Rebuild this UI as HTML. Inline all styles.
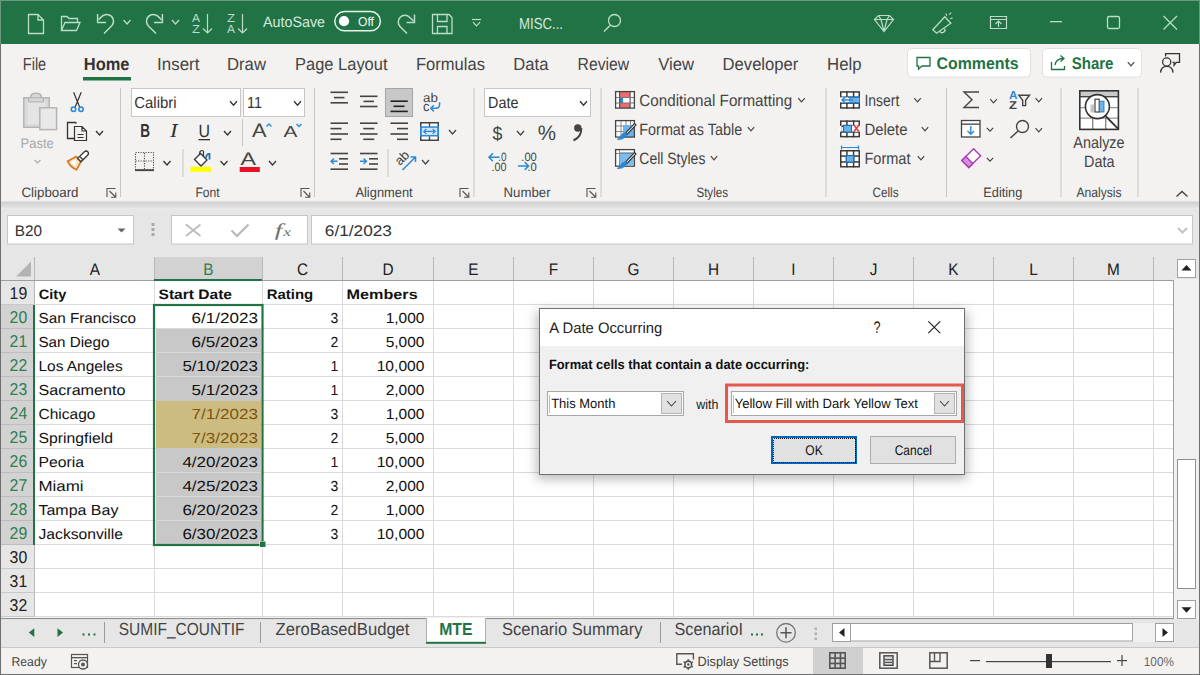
<!DOCTYPE html>
<html><head><meta charset="utf-8"><style>
html,body{margin:0;padding:0;width:1200px;height:675px;overflow:hidden;background:#f3f2f1}
svg{display:block;font-family:"Liberation Sans",sans-serif}
</style></head><body>
<svg width="1200" height="675" viewBox="0 0 1200 675" text-rendering="geometricPrecision">
<rect x="0" y="0" width="1200" height="675" fill="#f3f2f1" />
<rect x="0" y="0" width="1200" height="44" fill="#217346" />
<rect x="0" y="0" width="1200" height="1" fill="#6c9880" />
<path d="M28.5 14.5 H38 L43.5 20 V33.5 H28.5 Z M38 14.5 V20 H43.5" fill="none" stroke="#bddcc8" stroke-width="1.3" />
<path d="M61.5 30.5 V16.5 H67 L69 18.5 H77.5 V22.5 M61.5 30.5 L65 22.5 H80 L76.5 30.5 Z" fill="none" stroke="#bddcc8" stroke-width="1.3" />
<path d="M104 33.5 L111.8 25.7 A6.8 6.8 0 0 0 102.2 16.1 L98.5 19.8" fill="none" stroke="#bddcc8" stroke-width="1.5" />
<path d="M97.6 14 V22.6 H106" fill="none" stroke="#bddcc8" stroke-width="1.5" />
<path d="M123.5 20.0 L127.0 24.0 L130.5 20.0" fill="none" stroke="#bddcc8" stroke-width="1.2" />
<path d="M156 33.5 L148.2 25.7 A6.8 6.8 0 0 1 157.8 16.1 L161.5 19.8" fill="none" stroke="#bddcc8" stroke-width="1.5" />
<path d="M162.4 14 V22.6 H154" fill="none" stroke="#bddcc8" stroke-width="1.5" />
<path d="M172.0 20.0 L175.5 24.0 L179.0 20.0" fill="none" stroke="#bddcc8" stroke-width="1.2" />
<text x="192.00" y="22.00" font-size="11.63" fill="#bddcc8" textLength="8.00" lengthAdjust="spacingAndGlyphs">A</text>
<text x="192.00" y="33.00" font-size="11.63" fill="#bddcc8" textLength="8.00" lengthAdjust="spacingAndGlyphs">Z</text>
<path d="M207.5 14 V33 M203 28.5 L207.5 33 L212 28.5" fill="none" stroke="#bddcc8" stroke-width="1.2" />
<text x="227.00" y="22.00" font-size="11.63" fill="#bddcc8" textLength="8.00" lengthAdjust="spacingAndGlyphs">Z</text>
<text x="227.00" y="33.00" font-size="11.63" fill="#bddcc8" textLength="8.00" lengthAdjust="spacingAndGlyphs">A</text>
<path d="M242.5 14 V33 M238 28.5 L242.5 33 L247 28.5" fill="none" stroke="#bddcc8" stroke-width="1.2" />
<text x="263.00" y="27.00" font-size="14.97" fill="#d6e8dd" textLength="62.01" lengthAdjust="spacingAndGlyphs">AutoSave</text>
<rect x="334.8" y="11.6" width="45.6" height="19.2" fill="none" stroke="#e6f5ec" stroke-width="1.5" rx="9.6" />
<circle cx="344" cy="21.2" r="5.1" fill="#ffffff"/>
<text x="358.00" y="25.80" font-size="12.79" fill="#f2fbf5" textLength="15.97" lengthAdjust="spacingAndGlyphs">Off</text>
<path d="M407 33.5 L400.2 26.7 A6.6 6.6 0 0 1 409.6 17.3 L413.5 21" fill="none" stroke="#bddcc8" stroke-width="1.5" />
<path d="M414.5 14.5 V22.6 H406.5" fill="none" stroke="#bddcc8" stroke-width="1.5" />
<path d="M432.5 14.5 H449 L452 17.5 V33.5 H432.5 Z M437.5 14.5 V21.5 H447 V14.5 M437.5 33.5 V26.5 H447 V33.5" fill="none" stroke="#bddcc8" stroke-width="1.3" />
<path d="M472 19.5 H481" fill="none" stroke="#bddcc8" stroke-width="1.2" />
<path d="M473.0 22.2 L476.5 25.8 L480.0 22.2" fill="none" stroke="#bddcc8" stroke-width="1.2" />
<text x="519.00" y="29.00" font-size="15.99" fill="#d6e8dd" textLength="43.99" lengthAdjust="spacingAndGlyphs">MISC...</text>
<circle cx="614.5" cy="20.5" r="6" fill="none" stroke="#bddcc8" stroke-width="1.3"/>
<path d="M610 25.5 L604 31.5" fill="none" stroke="#bddcc8" stroke-width="1.4" />
<path d="M874.5 19.5 L878.5 15.5 H889.5 L893.5 19.5 L884 31.5 Z M874.5 19.5 H893.5 M878.5 15.5 L881 19.5 L884 31.5 L887 19.5 L889.5 15.5" fill="none" stroke="#bddcc8" stroke-width="1.2" />
<path d="M932.8 29.8 L944.8 16.8 L950.8 23.2 L936.6 33.2 Z" fill="none" stroke="#bddcc8" stroke-width="1.3" />
<path d="M939.8 31.2 A2.6 2.6 0 0 0 944.6 28.6" fill="none" stroke="#bddcc8" stroke-width="1.3" />
<path d="M945.8 13.6 L946.8 15.8 M949.2 14.6 L951.2 12.6 M950.2 18.6 L952.6 18" fill="none" stroke="#bddcc8" stroke-width="1.2" />
<path d="M990.5 16.5 H1006.5 V28.5 H990.5 Z M990.5 19.5 H1006.5 M998.5 27 V21" fill="none" stroke="#bddcc8" stroke-width="1.2" />
<path d="M995.5 24 L998.5 21 L1001.5 24" fill="none" stroke="#bddcc8" stroke-width="1.2" />
<rect x="1050" y="21" width="12" height="1.3" fill="#bddcc8" />
<rect x="1107.5" y="16.5" width="12" height="12" fill="none" stroke="#bddcc8" stroke-width="1.3" rx="1.5" />
<path d="M1163.5 16 L1177 29.5 M1177 16 L1163.5 29.5" fill="none" stroke="#bddcc8" stroke-width="1.3" />
<text x="22.80" y="69.80" font-size="17.44" fill="#444444" textLength="23.40" lengthAdjust="spacingAndGlyphs">File</text>
<text x="157.10" y="69.80" font-size="17.44" fill="#444444" textLength="42.30" lengthAdjust="spacingAndGlyphs">Insert</text>
<text x="227.00" y="69.80" font-size="17.44" fill="#444444" textLength="38.96" lengthAdjust="spacingAndGlyphs">Draw</text>
<text x="295.10" y="69.80" font-size="17.44" fill="#444444" textLength="92.40" lengthAdjust="spacingAndGlyphs">Page Layout</text>
<text x="416.00" y="69.80" font-size="17.44" fill="#444444" textLength="68.99" lengthAdjust="spacingAndGlyphs">Formulas</text>
<text x="513.30" y="69.80" font-size="17.44" fill="#444444" textLength="35.09" lengthAdjust="spacingAndGlyphs">Data</text>
<text x="577.60" y="69.80" font-size="17.44" fill="#444444" textLength="51.55" lengthAdjust="spacingAndGlyphs">Review</text>
<text x="658.30" y="69.80" font-size="17.44" fill="#444444" textLength="35.76" lengthAdjust="spacingAndGlyphs">View</text>
<text x="722.60" y="69.80" font-size="17.44" fill="#444444" textLength="75.70" lengthAdjust="spacingAndGlyphs">Developer</text>
<text x="827.10" y="69.80" font-size="17.44" fill="#444444" textLength="34.49" lengthAdjust="spacingAndGlyphs">Help</text>
<text x="83.80" y="69.80" font-size="17.44" fill="#333333" font-weight="bold" textLength="45.71" lengthAdjust="spacingAndGlyphs">Home</text>
<rect x="83" y="77" width="48" height="3.5" fill="#217346" />
<rect x="907.5" y="48.5" width="123" height="28.5" fill="#ffffff" stroke="#e1dfdd" stroke-width="1" rx="4" />
<path d="M917 57.5 H930 V66 H922 L918.5 69 V66 H917 Z" fill="none" stroke="#217346" stroke-width="1.3" />
<text x="936.50" y="68.50" font-size="16.72" fill="#217346" font-weight="bold" textLength="82.19" lengthAdjust="spacingAndGlyphs">Comments</text>
<rect x="1042.5" y="48.5" width="99" height="28.5" fill="#ffffff" stroke="#e1dfdd" stroke-width="1" rx="4" />
<path d="M1051.5 62 V69.5 H1064.5 V66 M1055 65 C1056 60 1059 58.5 1063 58.5 M1060.5 55.5 L1064 58.5 L1060.5 61.5" fill="none" stroke="#217346" stroke-width="1.3" />
<text x="1071.70" y="68.50" font-size="16.72" fill="#217346" font-weight="bold" textLength="41.80" lengthAdjust="spacingAndGlyphs">Share</text>
<path d="M1127.8 62.2 L1131.0 65.8 L1134.2 62.2" fill="none" stroke="#444" stroke-width="1.2" />
<circle cx="1166.7" cy="62" r="4.1" fill="none" stroke="#333" stroke-width="1.3"/>
<path d="M1160.6 72.6 C1160.9 68.2 1163.4 66.4 1166.8 66.4 C1170.2 66.4 1172.7 68.2 1173 72.6" fill="none" stroke="#333" stroke-width="1.3" />
<path d="M1165.6 56.6 V53.6 H1179.5 V62.3 H1176.3 L1174.1 65.3 V62.3 H1172.6" fill="none" stroke="#333" stroke-width="1.3" />
<path d="M23.8 97.8 H30.5 Q30.5 93.2 36 93.2 Q41.5 93.2 41.5 97.8 H49.2 V127.2 H23.8 Z" fill="#d9d9d9" stroke="#b5b5b5" stroke-width="1.5" />
<rect x="27.5" y="101.5" width="18" height="22.5" fill="#e4e4e4" />
<rect x="28.8" y="97.8" width="14.5" height="4" fill="#d9d9d9" stroke="#b5b5b5" stroke-width="1.2" rx="0" />
<rect x="39.8" y="107.8" width="16.8" height="21.8" fill="#e9e9e9" stroke="#b5b5b5" stroke-width="1.5" rx="0" />
<text x="20.50" y="147.50" font-size="13.95" fill="#a6a6a6" textLength="33.30" lengthAdjust="spacingAndGlyphs">Paste</text>
<path d="M34.5 160.0 L37.5 163.0 L40.5 160.0" fill="none" stroke="#aaa" stroke-width="1.1" />
<path d="M73.6 92.3 L79.6 107 M81.2 92.3 L75.2 107" fill="none" stroke="#333" stroke-width="1.2" />
<circle cx="73.5" cy="109.3" r="2.2" fill="#ffffff" stroke="#2b88d8" stroke-width="1.6"/>
<circle cx="81" cy="109.3" r="2.2" fill="#ffffff" stroke="#2b88d8" stroke-width="1.6"/>
<path d="M74.5 138.5 H67.5 V122.5 H75.5 L76.5 123.5" fill="none" stroke="#333" stroke-width="1.3" />
<path d="M74.5 126.5 H82 L86.5 131 V140.5 H74.5 Z M82 126.5 V131 H86.5 M77.5 134.5 H83.5 M77.5 137.5 H83.5" fill="none" stroke="#333" stroke-width="1.2" />
<path d="M96.0 131.0 L99.5 135.0 L103.0 131.0" fill="none" stroke="#333" stroke-width="1.3" />
<path d="M67.6 161.2 L76.2 156.6 L81 161.4 L76.6 169.8 Q70.5 167.5 67.6 161.2 Z" fill="#fbe0c2" stroke="#d6771f" stroke-width="1.7" />
<path d="M70.5 162.2 L75.8 159.5 L75.5 166.5 Z" fill="#ffffff" stroke="#ffffff" stroke-width="0" />
<path d="M77.6 158.4 L84.4 151.8 Q86.2 150.2 87.8 151.8 Q89.3 153.6 87.6 155.2 L81 161.8 Z" fill="#ffffff" stroke="#333" stroke-width="1.3" />
<path d="M79.6 156.4 L83 159.8" fill="none" stroke="#333" stroke-width="1.3" />
<text x="21.50" y="197.00" font-size="13.66" fill="#444444" textLength="57.00" lengthAdjust="spacingAndGlyphs">Clipboard</text>
<path d="M107.0 197.0 V188.5 H115.5" fill="none" stroke="#555" stroke-width="1.1" />
<path d="M109.5 191.0 L115.5 197.0 M111.0 197.3 H115.8 V192.5" fill="none" stroke="#555" stroke-width="1.1" />
<rect x="120" y="88" width="1" height="109" fill="#c8c6c4" />
<rect x="131.5" y="88.5" width="109" height="28" fill="#ffffff" stroke="#c8c6c4" stroke-width="1" rx="0" />
<text x="134.30" y="107.80" font-size="15.99" fill="#333" textLength="42.30" lengthAdjust="spacingAndGlyphs">Calibri</text>
<path d="M230.0 101.3 L233.5 105.3 L237.0 101.3" fill="none" stroke="#333" stroke-width="1.3" />
<rect x="243.5" y="88.5" width="61" height="28" fill="#ffffff" stroke="#c8c6c4" stroke-width="1" rx="0" />
<text x="247.00" y="107.80" font-size="15.99" fill="#333" textLength="15.00" lengthAdjust="spacingAndGlyphs">11</text>
<path d="M294.0 101.3 L297.5 105.3 L301.0 101.3" fill="none" stroke="#333" stroke-width="1.3" />
<text x="140.20" y="137.20" font-size="18.75" fill="#333" font-weight="bold" textLength="9.80" lengthAdjust="spacingAndGlyphs">B</text>
<text x="170.09" y="137.20" font-size="19.69" fill="#333" font-style="italic" font-family="Liberation Serif" textLength="7.51" lengthAdjust="spacingAndGlyphs">I</text>
<text x="198.50" y="136.50" font-size="17.88" fill="#333" textLength="11.50" lengthAdjust="spacingAndGlyphs">U</text>
<rect x="198.5" y="139" width="11.5" height="1.3" fill="#333" />
<path d="M224.0 131.0 L227.5 135.0 L231.0 131.0" fill="none" stroke="#333" stroke-width="1.3" />
<rect x="242" y="119" width="1" height="27" fill="#c8c6c4" />
<text x="252.00" y="137.00" font-size="19.62" fill="#444" textLength="14.50" lengthAdjust="spacingAndGlyphs">A</text>
<path d="M267 101 M266.5 126.5 L269 124 L271.5 126.5" fill="none" stroke="#2b88d8" stroke-width="1.4" />
<text x="283.60" y="137.00" font-size="15.99" fill="#444" textLength="13.90" lengthAdjust="spacingAndGlyphs">A</text>
<path d="M296.5 124 L299 126.5 L301.5 124" fill="none" stroke="#2b88d8" stroke-width="1.4" />
<rect x="135.5" y="152.5" width="18" height="17" fill="none" stroke="#555" stroke-width="1.1" rx="0" stroke-dasharray="1.2 1.3"/>
<path d="M144.5 153 V169 M135.5 161 H153.5" fill="none" stroke="#555" stroke-width="1.1" stroke-dasharray="1.2 1.3"/>
<rect x="135" y="169.3" width="19" height="1.8" fill="#444" />
<path d="M163.5 161.0 L167.0 165.0 L170.5 161.0" fill="none" stroke="#333" stroke-width="1.3" />
<rect x="182.5" y="149" width="1" height="28" fill="#c8c6c4" />
<path d="M194.5 159.5 L200.5 153.5 L207 160 L201 166 Z" fill="#ffffff" stroke="#333" stroke-width="1.3" />
<path d="M199.5 154.5 L200 151.5 Q202 149.5 203.5 151.5 L203.5 157" fill="none" stroke="#333" stroke-width="1.2" />
<path d="M206 158 Q206.5 153.5 209.5 154 V159.5" fill="none" stroke="#1f6fb2" stroke-width="1.8" />
<rect x="190.4" y="166.8" width="20.6" height="5" fill="#ffff00" />
<path d="M220.5 161.0 L224.0 165.0 L227.5 161.0" fill="none" stroke="#333" stroke-width="1.3" />
<text x="240.50" y="165.00" font-size="18.17" fill="#444" textLength="15.50" lengthAdjust="spacingAndGlyphs">A</text>
<rect x="239.7" y="167" width="20.1" height="5" fill="#e81123" />
<path d="M269.0 161.0 L272.5 165.0 L276.0 161.0" fill="none" stroke="#333" stroke-width="1.3" />
<text x="195.40" y="197.00" font-size="13.66" fill="#444444" textLength="24.20" lengthAdjust="spacingAndGlyphs">Font</text>
<path d="M301.0 197.0 V188.5 H309.5" fill="none" stroke="#555" stroke-width="1.1" />
<path d="M303.5 191.0 L309.5 197.0 M305.0 197.3 H309.8 V192.5" fill="none" stroke="#555" stroke-width="1.1" />
<rect x="314" y="88" width="1" height="109" fill="#c8c6c4" />
<rect x="330.5" y="91.5" width="17.5" height="1.6" fill="#444" />
<rect x="334" y="96.8" width="10.5" height="1.6" fill="#444" />
<rect x="330.5" y="102.0" width="17.5" height="1.6" fill="#444" />
<rect x="360" y="95.5" width="17.5" height="1.6" fill="#444" />
<rect x="363.5" y="100.60000000000001" width="10.5" height="1.6" fill="#444" />
<rect x="360" y="105.7" width="17.5" height="1.6" fill="#444" />
<rect x="385.5" y="88.5" width="27" height="28" fill="#c8c8c8" stroke="#a6a6a6" stroke-width="1" rx="0" />
<rect x="390.5" y="100.4" width="17.3" height="1.6" fill="#222" />
<rect x="393.5" y="105.5" width="11" height="1.6" fill="#222" />
<rect x="390.5" y="110.60000000000001" width="17.3" height="1.6" fill="#222" />
<text x="423.00" y="101.50" font-size="12.79" fill="#444" textLength="14.80" lengthAdjust="spacingAndGlyphs">ab</text>
<text x="423.00" y="110.80" font-size="13.37" fill="#444" textLength="6.50" lengthAdjust="spacingAndGlyphs">c</text>
<path d="M439.6 102.2 V104.3 Q439.6 108.3 435.8 108.3 H431 M433.9 105.2 L430.8 108.3 L433.9 111.4" fill="none" stroke="#2b88d8" stroke-width="1.5" />
<rect x="330.5" y="122.4" width="17.5" height="1.6" fill="#444" />
<rect x="330.5" y="127.8" width="11" height="1.6" fill="#444" />
<rect x="330.5" y="133.2" width="17.5" height="1.6" fill="#444" />
<rect x="330.5" y="138.5" width="11" height="1.6" fill="#444" />
<rect x="360.0" y="122.4" width="17.5" height="1.6" fill="#444" />
<rect x="363.25" y="127.8" width="11" height="1.6" fill="#444" />
<rect x="360.0" y="133.2" width="17.5" height="1.6" fill="#444" />
<rect x="363.25" y="138.5" width="11" height="1.6" fill="#444" />
<rect x="390.5" y="122.4" width="17.5" height="1.6" fill="#444" />
<rect x="397.0" y="127.8" width="11" height="1.6" fill="#444" />
<rect x="390.5" y="133.2" width="17.5" height="1.6" fill="#444" />
<rect x="397.0" y="138.5" width="11" height="1.6" fill="#444" />
<rect x="420" y="122" width="19" height="19" fill="#ffffff" />
<rect x="420.75" y="122.75" width="17.5" height="17.5" fill="none" stroke="#444" stroke-width="1.5" rx="0" />
<rect x="420" y="126.3" width="19" height="10.2" fill="#2b88d8" />
<rect x="421.8" y="127.8" width="15.4" height="7.2" fill="#cfe6f8" />
<rect x="428.8" y="122" width="1.4" height="4.5" fill="#444" />
<rect x="428.8" y="136.5" width="1.4" height="4.5" fill="#444" />
<path d="M423.8 131.4 H435.2 M426.3 128.9 L423.8 131.4 L426.3 133.9 M432.7 128.9 L435.2 131.4 L432.7 133.9" fill="none" stroke="#2b88d8" stroke-width="1.3" />
<path d="M449.0 130.0 L452.5 134.0 L456.0 130.0" fill="none" stroke="#444" stroke-width="1.3" />
<rect x="330.5" y="152.7" width="17.5" height="1.6" fill="#444" />
<rect x="339" y="158.0" width="9" height="1.6" fill="#444" />
<rect x="339" y="163.2" width="9" height="1.6" fill="#444" />
<rect x="330.5" y="168.39999999999998" width="17.5" height="1.6" fill="#444" />
<path d="M337.5 161.3 H331 M334 158.5 L331 161.3 L334 164" fill="none" stroke="#2b88d8" stroke-width="1.4" />
<rect x="360" y="152.7" width="17.5" height="1.6" fill="#444" />
<rect x="369" y="158.0" width="9" height="1.6" fill="#444" />
<rect x="369" y="163.2" width="9" height="1.6" fill="#444" />
<rect x="360" y="168.39999999999998" width="17.5" height="1.6" fill="#444" />
<path d="M360 161.3 H366.5 M363.5 158.5 L366.5 161.3 L363.5 164" fill="none" stroke="#2b88d8" stroke-width="1.4" />
<rect x="387.5" y="149" width="1" height="28" fill="#c8c6c4" />
<text x="0" y="0" font-size="13" fill="#444" transform="translate(400 166) rotate(-45)" font-family="Liberation Sans">ab</text>
<path d="M402.5 170 L415.5 157 M410.5 157 H415.5 V162" fill="none" stroke="#2b88d8" stroke-width="1.5" />
<path d="M422.0 160.0 L425.5 164.0 L429.0 160.0" fill="none" stroke="#444" stroke-width="1.3" />
<text x="355.40" y="197.00" font-size="13.66" fill="#444444" textLength="57.30" lengthAdjust="spacingAndGlyphs">Alignment</text>
<path d="M460.0 197.0 V188.5 H468.5" fill="none" stroke="#555" stroke-width="1.1" />
<path d="M462.5 191.0 L468.5 197.0 M464.0 197.3 H468.8 V192.5" fill="none" stroke="#555" stroke-width="1.1" />
<rect x="473.5" y="88" width="1" height="109" fill="#c8c6c4" />
<rect x="484.5" y="88.5" width="106" height="28" fill="#ffffff" stroke="#c8c6c4" stroke-width="1" rx="0" />
<text x="488.00" y="107.80" font-size="15.99" fill="#333" textLength="30.40" lengthAdjust="spacingAndGlyphs">Date</text>
<path d="M580.0 101.3 L583.5 105.3 L587.0 101.3" fill="none" stroke="#333" stroke-width="1.3" />
<text x="492.40" y="139.50" font-size="19.19" fill="#444" textLength="9.90" lengthAdjust="spacingAndGlyphs">$</text>
<path d="M517.0 131.0 L520.5 135.0 L524.0 131.0" fill="none" stroke="#444" stroke-width="1.3" />
<text x="537.70" y="140.00" font-size="21.08" fill="#444" textLength="18.30" lengthAdjust="spacingAndGlyphs">%</text>
<circle cx="577.8" cy="128" r="3.7" fill="#444"/>
<path d="M581.3 128 Q581.8 136.5 573.5 140.5" fill="none" stroke="#444" stroke-width="2.0" />
<text x="498.30" y="160.50" font-size="12.06" fill="#444" textLength="8.30" lengthAdjust="spacingAndGlyphs">.0</text>
<path d="M499.5 157.3 H489 M492.9 153.4 L489 157.3 L492.9 161.2" fill="none" stroke="#2b88d8" stroke-width="1.5" />
<text x="491.60" y="170.50" font-size="12.06" fill="#444" textLength="15.00" lengthAdjust="spacingAndGlyphs">.00</text>
<text x="521.30" y="160.50" font-size="12.06" fill="#444" textLength="15.50" lengthAdjust="spacingAndGlyphs">.00</text>
<text x="527.40" y="170.50" font-size="12.06" fill="#444" textLength="9.40" lengthAdjust="spacingAndGlyphs">.0</text>
<path d="M518 166 H528.6 M524.7 162.1 L528.6 166 L524.7 169.9" fill="none" stroke="#2b88d8" stroke-width="1.5" />
<text x="503.50" y="197.00" font-size="13.66" fill="#444444" textLength="47.10" lengthAdjust="spacingAndGlyphs">Number</text>
<path d="M587.0 197.0 V188.5 H595.5" fill="none" stroke="#555" stroke-width="1.1" />
<path d="M589.5 191.0 L595.5 197.0 M591.0 197.3 H595.8 V192.5" fill="none" stroke="#555" stroke-width="1.1" />
<rect x="600.5" y="88" width="1" height="109" fill="#c8c6c4" />
<rect x="615" y="91" width="20" height="17.5" fill="#ffffff" />
<rect x="619" y="92" width="11" height="5" fill="#f0696b" />
<rect x="619" y="103" width="11" height="5" fill="#f0696b" />
<rect x="619" y="97.5" width="4" height="5.5" fill="#2b88d8" />
<rect x="619" y="91.5" width="1.2" height="16.5" fill="#555" />
<rect x="629.5" y="91.5" width="1.2" height="16.5" fill="#555" />
<rect x="615" y="97" width="20" height="1" fill="#777" />
<rect x="615" y="102.5" width="20" height="1" fill="#777" />
<rect x="615.6" y="91.6" width="18.8" height="16.5" fill="none" stroke="#444" stroke-width="1.3" rx="0" />
<text x="639.30" y="106.00" font-size="16.42" fill="#444" textLength="152.99" lengthAdjust="spacingAndGlyphs">Conditional Formatting</text>
<path d="M798.2 98.2 L801.5 101.8 L804.8 98.2" fill="none" stroke="#444" stroke-width="1.2" />
<rect x="615" y="120" width="20" height="17.7" fill="#ffffff" />
<rect x="620.5" y="120.5" width="1" height="17" fill="#888" />
<rect x="625.5" y="120.5" width="1" height="17" fill="#888" />
<rect x="630" y="120.5" width="1" height="17" fill="#888" />
<rect x="615" y="125.5" width="20" height="1" fill="#888" />
<rect x="615" y="131" width="20" height="1" fill="#888" />
<rect x="623" y="125" width="11" height="12" fill="#6cb2eb" />
<rect x="615.6" y="120.6" width="18.8" height="16.5" fill="none" stroke="#444" stroke-width="1.3" rx="0" />
<path d="M634.5 123.5 L636 125 L627 134.5 L625.5 133 Z" fill="#ffffff" stroke="#333" stroke-width="1.1" />
<path d="M625.5 132.5 Q621.5 133 620.5 136.5 Q619.5 138.5 617 139.5 Q623 140.5 627 135 Z" fill="#2b88d8" stroke="#2b88d8" stroke-width="0.6" />
<text x="639.30" y="134.80" font-size="16.42" fill="#444" textLength="102.91" lengthAdjust="spacingAndGlyphs">Format as Table</text>
<path d="M747.8 127.2 L751.0 130.8 L754.2 127.2" fill="none" stroke="#444" stroke-width="1.2" />
<rect x="615" y="149" width="20" height="17.8" fill="#ffffff" />
<rect x="619.5" y="152" width="14" height="13" fill="#7fbbeb" />
<rect x="619" y="149.5" width="1" height="17" fill="#888" />
<rect x="615" y="153" width="20" height="1" fill="#888" />
<rect x="615.6" y="149.6" width="18.8" height="16.6" fill="none" stroke="#444" stroke-width="1.3" rx="0" />
<path d="M634.5 152.5 L636 154 L627 163.5 L625.5 162 Z" fill="#ffffff" stroke="#333" stroke-width="1.1" />
<path d="M625.5 161.5 Q621.5 162 620.5 165.5 Q619.5 167.5 617 168.5 Q623 169.5 627 164 Z" fill="#2b88d8" stroke="#2b88d8" stroke-width="0.6" />
<text x="639.30" y="163.50" font-size="16.42" fill="#444" textLength="66.10" lengthAdjust="spacingAndGlyphs">Cell Styles</text>
<path d="M710.8 156.2 L714.0 159.8 L717.2 156.2" fill="none" stroke="#444" stroke-width="1.2" />
<text x="696.40" y="196.70" font-size="13.66" fill="#444444" textLength="31.60" lengthAdjust="spacingAndGlyphs">Styles</text>
<rect x="825.5" y="88" width="1" height="109" fill="#c8c6c4" />
<rect x="840" y="91.2" width="20" height="17.5" fill="#ffffff" />
<rect x="840.75" y="91.95" width="18.5" height="16.0" fill="none" stroke="#3a3a3a" stroke-width="1.5" rx="0" />
<rect x="846.1666666666666" y="91.2" width="1.5" height="17.5" fill="#3a3a3a" />
<rect x="852.8333333333334" y="91.2" width="1.5" height="17.5" fill="#3a3a3a" />
<rect x="840" y="96.53333333333333" width="20" height="1.5" fill="#3a3a3a" />
<rect x="840" y="102.36666666666667" width="20" height="1.5" fill="#3a3a3a" />
<rect x="839.5" y="97.3" width="9.5" height="5" fill="#ffffff" />
<rect x="849" y="97" width="10.5" height="5.8" fill="#6cb2eb" />
<rect x="848" y="96.5" width="11.5" height="1.3" fill="#1f6fb2" />
<rect x="848" y="102.3" width="11.5" height="1.3" fill="#1f6fb2" />
<path d="M853 100 H842.3 M845.5 96.6 L842.1 100 L845.5 103.4" fill="none" stroke="#2b88d8" stroke-width="1.5" />
<text x="864.40" y="106.00" font-size="16.42" fill="#444" textLength="35.00" lengthAdjust="spacingAndGlyphs">Insert</text>
<path d="M914.2 98.2 L917.5 101.8 L920.8 98.2" fill="none" stroke="#444" stroke-width="1.2" />
<rect x="840" y="120.4" width="20" height="17" fill="#ffffff" />
<rect x="840.75" y="121.15" width="18.5" height="15.5" fill="none" stroke="#3a3a3a" stroke-width="1.5" rx="0" />
<rect x="846.1666666666666" y="120.4" width="1.5" height="17" fill="#3a3a3a" />
<rect x="852.8333333333334" y="120.4" width="1.5" height="17" fill="#3a3a3a" />
<rect x="840" y="125.56666666666668" width="20" height="1.5" fill="#3a3a3a" />
<rect x="840" y="131.23333333333335" width="20" height="1.5" fill="#3a3a3a" />
<rect x="839.5" y="125.8" width="2" height="5.8" fill="#ffffff" />
<rect x="858.5" y="125.8" width="2" height="5.8" fill="#ffffff" />
<rect x="850" y="125.8" width="9" height="5.8" fill="#ffffff" />
<rect x="843.5" y="125.3" width="8" height="6.8" fill="#6cb2eb" stroke="#1f6fb2" stroke-width="1.2" rx="0" />
<path d="M853.8 125.3 L859 131.5 M859 125.3 L853.8 131.5" fill="none" stroke="#e0383e" stroke-width="1.4" />
<text x="864.40" y="134.50" font-size="16.42" fill="#444" textLength="43.09" lengthAdjust="spacingAndGlyphs">Delete</text>
<path d="M921.8 127.2 L925.0 130.8 L928.2 127.2" fill="none" stroke="#444" stroke-width="1.2" />
<rect x="840" y="150" width="20" height="17.5" fill="#ffffff" />
<rect x="840.75" y="150.75" width="18.5" height="16.0" fill="none" stroke="#3a3a3a" stroke-width="1.5" rx="0" />
<rect x="846.1666666666666" y="150" width="1.5" height="17.5" fill="#3a3a3a" />
<rect x="852.8333333333334" y="150" width="1.5" height="17.5" fill="#3a3a3a" />
<rect x="840" y="155.33333333333334" width="20" height="1.5" fill="#3a3a3a" />
<rect x="840" y="161.16666666666666" width="20" height="1.5" fill="#3a3a3a" />
<rect x="846.2" y="155.6" width="7.6" height="6.6" fill="#6cb2eb" stroke="#1f6fb2" stroke-width="1.3" rx="0" />
<path d="M841.5 147.5 H858.5 M841.5 145.5 V149.5 M858.5 145.5 V149.5" fill="none" stroke="#2b88d8" stroke-width="1.2" />
<text x="864.40" y="163.70" font-size="16.42" fill="#444" textLength="46.10" lengthAdjust="spacingAndGlyphs">Format</text>
<path d="M917.8 156.2 L921.0 159.8 L924.2 156.2" fill="none" stroke="#444" stroke-width="1.2" />
<text x="872.50" y="197.00" font-size="13.66" fill="#444444" textLength="26.00" lengthAdjust="spacingAndGlyphs">Cells</text>
<rect x="946" y="88" width="1" height="109" fill="#c8c6c4" />
<path d="M979 92 H964 L972 99.7 L964 107.5 H979" fill="none" stroke="#444" stroke-width="1.4" />
<path d="M990.2 99.2 L993.5 102.8 L996.8 99.2" fill="none" stroke="#444" stroke-width="1.2" />
<text x="1009.00" y="98.50" font-size="11.63" fill="#2b88d8" font-weight="bold" textLength="8.50" lengthAdjust="spacingAndGlyphs">A</text>
<text x="1009.00" y="109.00" font-size="11.34" fill="#444" font-weight="bold" textLength="8.00" lengthAdjust="spacingAndGlyphs">Z</text>
<path d="M1018.8 95.3 H1029.5 L1025.6 100.3 V105.6 H1022.7 V100.3 Z" fill="#f3f2f1" stroke="#444" stroke-width="1.4" />
<path d="M1035.5 98.2 L1038.8 101.8 L1042.0 98.2" fill="none" stroke="#444" stroke-width="1.2" />
<rect x="961.5" y="120.5" width="18.5" height="16.5" fill="#ffffff" stroke="#444" stroke-width="1.3" rx="0" />
<rect x="961" y="123.5" width="19" height="1.3" fill="#444" />
<path d="M970.8 126 V134 M967.5 131 L970.8 134.3 L974 131" fill="none" stroke="#2b88d8" stroke-width="1.4" />
<path d="M986.8 127.8 L990.0 131.2 L993.2 127.8" fill="none" stroke="#444" stroke-width="1.2" />
<circle cx="1022.5" cy="126.5" r="6" fill="none" stroke="#444" stroke-width="1.4"/>
<path d="M1018 131 L1010.5 138" fill="none" stroke="#444" stroke-width="1.5" />
<path d="M1035.5 128.2 L1038.8 131.8 L1042.0 128.2" fill="none" stroke="#444" stroke-width="1.2" />
<path d="M961.8 160.6 L973.6 148.8 L980.6 155.8 L968.8 167.6 Z" fill="#ffffff" stroke="#a93bb8" stroke-width="1.4" />
<path d="M961.8 160.6 L965.8 156.6 L972.8 163.6 L968.8 167.6 Z" fill="#d58fe0" stroke="#a93bb8" stroke-width="1.4" />
<path d="M986.8 157.8 L990.0 161.2 L993.2 157.8" fill="none" stroke="#444" stroke-width="1.2" />
<text x="983.30" y="197.00" font-size="13.66" fill="#444444" textLength="39.00" lengthAdjust="spacingAndGlyphs">Editing</text>
<rect x="1060.5" y="88" width="1" height="109" fill="#c8c6c4" />
<rect x="1079" y="90" width="40" height="40" fill="#ffffff" />
<rect x="1080" y="91" width="38" height="5.5" fill="#c9c9c9" />
<rect x="1079" y="96" width="40" height="1.4" fill="#444" />
<rect x="1080" y="107" width="38" height="1.3" fill="#999" />
<rect x="1080" y="117.5" width="38" height="1.3" fill="#999" />
<rect x="1092" y="118" width="1.4" height="11" fill="#888" />
<rect x="1105" y="118" width="1.4" height="11" fill="#888" />
<rect x="1079.8" y="90.8" width="38.6" height="38.6" fill="none" stroke="#333" stroke-width="1.6" rx="0" />
<circle cx="1097.4" cy="106.6" r="12" fill="#ffffff" stroke="#333" stroke-width="1.6"/>
<rect x="1090.5" y="104.5" width="3.5" height="8" fill="#c4c4c4" />
<rect x="1095" y="99.2" width="4.2" height="12.8" fill="#ffffff" stroke="#333" stroke-width="1.1" rx="0" />
<rect x="1099.4" y="101.2" width="4.6" height="10.8" fill="#6cb2eb" stroke="#1f6fb2" stroke-width="0.8" rx="0" />
<path d="M1105.5 116 L1118.2 128.8" fill="none" stroke="#333" stroke-width="1.8" />
<text x="1073.30" y="148.40" font-size="16.42" fill="#444" textLength="51.29" lengthAdjust="spacingAndGlyphs">Analyze</text>
<text x="1084.00" y="167.40" font-size="16.42" fill="#444" textLength="30.39" lengthAdjust="spacingAndGlyphs">Data</text>
<text x="1076.50" y="197.00" font-size="13.66" fill="#444444" textLength="45.10" lengthAdjust="spacingAndGlyphs">Analysis</text>
<rect x="1137.5" y="88" width="1" height="109" fill="#c8c6c4" />
<path d="M1176.5 196.5 L1182 191.5 L1187.5 196.5" fill="none" stroke="#444" stroke-width="1.4" />
<defs><linearGradient id="sh" x1="0" y1="0" x2="0" y2="1"><stop offset="0" stop-color="#cfcfcf"/><stop offset="1" stop-color="#e6e6e6"/></linearGradient></defs>
<rect x="0" y="201.5" width="1200" height="7" fill="url(#sh)" />
<rect x="0" y="208.5" width="1200" height="48.5" fill="#e6e6e6" />
<rect x="7.5" y="215.5" width="126" height="28.5" fill="#ffffff" stroke="#c6c6c6" stroke-width="1" rx="0" />
<text x="14.70" y="235.80" font-size="15.26" fill="#333" textLength="27.30" lengthAdjust="spacingAndGlyphs">B20</text>
<path d="M117.5 228.5 H125.5 L121.5 232.5 Z" fill="#666" stroke="#666" stroke-width="0" />
<rect x="151.5" y="223" width="3" height="3" fill="#a9a9a9" />
<rect x="151.5" y="228" width="3" height="3" fill="#a9a9a9" />
<rect x="151.5" y="233" width="3" height="3" fill="#a9a9a9" />
<rect x="171.5" y="215.5" width="136" height="28.5" fill="#ffffff" stroke="#c6c6c6" stroke-width="1" rx="0" />
<path d="M186 224.5 L200.5 236 M200.5 224.5 L186 236" fill="none" stroke="#b9b9b9" stroke-width="1.6" />
<path d="M231.5 230.5 L237 236 L248.5 224.5" fill="none" stroke="#b9b9b9" stroke-width="2.2" />
<text x="274.80" y="236.00" font-size="18.00" fill="#707070" font-style="italic" font-family="Liberation Serif" textLength="7.55" lengthAdjust="spacingAndGlyphs">f</text>
<text x="283.23" y="236.00" font-size="12.50" fill="#707070" font-style="italic" font-family="Liberation Serif" textLength="7.77" lengthAdjust="spacingAndGlyphs">x</text>
<rect x="311.5" y="215.5" width="881" height="28.5" fill="#ffffff" stroke="#c6c6c6" stroke-width="1" rx="0" />
<text x="324.80" y="236.00" font-size="15.26" fill="#333" textLength="67.19" lengthAdjust="spacingAndGlyphs">6/1/2023</text>
<path d="M1178 228 L1182.5 232.5 L1187 228" fill="none" stroke="#c2c2c2" stroke-width="2" />
<rect x="0" y="257" width="1174" height="23" fill="#e6e6e6" />
<rect x="0" y="280" width="35" height="337" fill="#e6e6e6" />
<rect x="35" y="281" width="1139" height="336" fill="#ffffff" />
<rect x="1174" y="257" width="26" height="361" fill="#e6e6e6" />
<rect x="154" y="257" width="108" height="23" fill="#d2d2d2" />
<path d="M16 276.5 L31 276.5 L31 261.5 Z" fill="#b4b4b4" stroke="#b4b4b4" stroke-width="0" />
<rect x="154" y="257" width="1" height="23" fill="#b8b8b8" />
<rect x="262" y="257" width="1" height="23" fill="#b8b8b8" />
<rect x="342" y="257" width="1" height="23" fill="#b8b8b8" />
<rect x="433" y="257" width="1" height="23" fill="#b8b8b8" />
<rect x="513" y="257" width="1" height="23" fill="#b8b8b8" />
<rect x="593" y="257" width="1" height="23" fill="#b8b8b8" />
<rect x="673" y="257" width="1" height="23" fill="#b8b8b8" />
<rect x="753" y="257" width="1" height="23" fill="#b8b8b8" />
<rect x="833" y="257" width="1" height="23" fill="#b8b8b8" />
<rect x="913" y="257" width="1" height="23" fill="#b8b8b8" />
<rect x="993" y="257" width="1" height="23" fill="#b8b8b8" />
<rect x="1073" y="257" width="1" height="23" fill="#b8b8b8" />
<rect x="1153" y="257" width="1" height="23" fill="#b8b8b8" />
<rect x="34" y="257" width="1" height="360" fill="#b8b8b8" />
<rect x="0" y="280" width="1174" height="1" fill="#9e9e9e" />
<text x="89.87" y="274.80" font-size="16.72" fill="#222" textLength="10.26" lengthAdjust="spacingAndGlyphs">A</text>
<text x="203.37" y="274.80" font-size="16.72" fill="#2e7d4f" textLength="10.26" lengthAdjust="spacingAndGlyphs">B</text>
<text x="296.95" y="274.80" font-size="16.72" fill="#222" textLength="11.11" lengthAdjust="spacingAndGlyphs">C</text>
<text x="382.45" y="274.80" font-size="16.72" fill="#222" textLength="11.11" lengthAdjust="spacingAndGlyphs">D</text>
<text x="468.37" y="274.80" font-size="16.72" fill="#222" textLength="10.26" lengthAdjust="spacingAndGlyphs">E</text>
<text x="548.80" y="274.80" font-size="16.72" fill="#222" textLength="9.39" lengthAdjust="spacingAndGlyphs">F</text>
<text x="627.52" y="274.80" font-size="16.72" fill="#222" textLength="11.96" lengthAdjust="spacingAndGlyphs">G</text>
<text x="707.95" y="274.80" font-size="16.72" fill="#222" textLength="11.11" lengthAdjust="spacingAndGlyphs">H</text>
<text x="791.36" y="274.80" font-size="16.72" fill="#222" textLength="4.27" lengthAdjust="spacingAndGlyphs">I</text>
<text x="869.66" y="274.80" font-size="16.72" fill="#222" textLength="7.69" lengthAdjust="spacingAndGlyphs">J</text>
<text x="948.37" y="274.80" font-size="16.72" fill="#222" textLength="10.26" lengthAdjust="spacingAndGlyphs">K</text>
<text x="1029.22" y="274.80" font-size="16.72" fill="#222" textLength="8.55" lengthAdjust="spacingAndGlyphs">L</text>
<text x="1107.10" y="274.80" font-size="16.72" fill="#222" textLength="12.81" lengthAdjust="spacingAndGlyphs">M</text>
<rect x="154" y="281" width="1" height="336" fill="#dadada" />
<rect x="262" y="281" width="1" height="336" fill="#dadada" />
<rect x="342" y="281" width="1" height="336" fill="#dadada" />
<rect x="433" y="281" width="1" height="336" fill="#dadada" />
<rect x="513" y="281" width="1" height="336" fill="#dadada" />
<rect x="593" y="281" width="1" height="336" fill="#dadada" />
<rect x="673" y="281" width="1" height="336" fill="#dadada" />
<rect x="753" y="281" width="1" height="336" fill="#dadada" />
<rect x="833" y="281" width="1" height="336" fill="#dadada" />
<rect x="913" y="281" width="1" height="336" fill="#dadada" />
<rect x="993" y="281" width="1" height="336" fill="#dadada" />
<rect x="1073" y="281" width="1" height="336" fill="#dadada" />
<rect x="1153" y="281" width="1" height="336" fill="#dadada" />
<rect x="35" y="304" width="1139" height="1" fill="#dadada" />
<rect x="0" y="304" width="35" height="1" fill="#c8c8c8" />
<rect x="35" y="328" width="1139" height="1" fill="#dadada" />
<rect x="0" y="328" width="35" height="1" fill="#c8c8c8" />
<rect x="35" y="352" width="1139" height="1" fill="#dadada" />
<rect x="0" y="352" width="35" height="1" fill="#c8c8c8" />
<rect x="35" y="376" width="1139" height="1" fill="#dadada" />
<rect x="0" y="376" width="35" height="1" fill="#c8c8c8" />
<rect x="35" y="400" width="1139" height="1" fill="#dadada" />
<rect x="0" y="400" width="35" height="1" fill="#c8c8c8" />
<rect x="35" y="424" width="1139" height="1" fill="#dadada" />
<rect x="0" y="424" width="35" height="1" fill="#c8c8c8" />
<rect x="35" y="448" width="1139" height="1" fill="#dadada" />
<rect x="0" y="448" width="35" height="1" fill="#c8c8c8" />
<rect x="35" y="472" width="1139" height="1" fill="#dadada" />
<rect x="0" y="472" width="35" height="1" fill="#c8c8c8" />
<rect x="35" y="496" width="1139" height="1" fill="#dadada" />
<rect x="0" y="496" width="35" height="1" fill="#c8c8c8" />
<rect x="35" y="520" width="1139" height="1" fill="#dadada" />
<rect x="0" y="520" width="35" height="1" fill="#c8c8c8" />
<rect x="35" y="544" width="1139" height="1" fill="#dadada" />
<rect x="0" y="544" width="35" height="1" fill="#c8c8c8" />
<rect x="35" y="568" width="1139" height="1" fill="#dadada" />
<rect x="0" y="568" width="35" height="1" fill="#c8c8c8" />
<rect x="35" y="592" width="1139" height="1" fill="#dadada" />
<rect x="0" y="592" width="35" height="1" fill="#c8c8c8" />
<rect x="35" y="616" width="1139" height="1" fill="#dadada" />
<rect x="0" y="616" width="35" height="1" fill="#c8c8c8" />
<rect x="0" y="305" width="34" height="23" fill="#d2d2d2" />
<rect x="0" y="328" width="34" height="1" fill="#bdbdbd" />
<rect x="0" y="329" width="34" height="23" fill="#d2d2d2" />
<rect x="0" y="352" width="34" height="1" fill="#bdbdbd" />
<rect x="0" y="353" width="34" height="23" fill="#d2d2d2" />
<rect x="0" y="376" width="34" height="1" fill="#bdbdbd" />
<rect x="0" y="377" width="34" height="23" fill="#d2d2d2" />
<rect x="0" y="400" width="34" height="1" fill="#bdbdbd" />
<rect x="0" y="401" width="34" height="23" fill="#d2d2d2" />
<rect x="0" y="424" width="34" height="1" fill="#bdbdbd" />
<rect x="0" y="425" width="34" height="23" fill="#d2d2d2" />
<rect x="0" y="448" width="34" height="1" fill="#bdbdbd" />
<rect x="0" y="449" width="34" height="23" fill="#d2d2d2" />
<rect x="0" y="472" width="34" height="1" fill="#bdbdbd" />
<rect x="0" y="473" width="34" height="23" fill="#d2d2d2" />
<rect x="0" y="496" width="34" height="1" fill="#bdbdbd" />
<rect x="0" y="497" width="34" height="23" fill="#d2d2d2" />
<rect x="0" y="520" width="34" height="1" fill="#bdbdbd" />
<rect x="0" y="521" width="34" height="23" fill="#d2d2d2" />
<rect x="0" y="544" width="34" height="1" fill="#bdbdbd" />
<rect x="33" y="305" width="2" height="240" fill="#217346" />
<rect x="154" y="279" width="108" height="2" fill="#217346" />
<text x="9.60" y="298.80" font-size="17.15" fill="#222" textLength="17.60" lengthAdjust="spacingAndGlyphs">19</text>
<text x="9.60" y="322.80" font-size="17.15" fill="#2e7d4f" textLength="17.60" lengthAdjust="spacingAndGlyphs">20</text>
<text x="9.60" y="346.80" font-size="17.15" fill="#2e7d4f" textLength="17.60" lengthAdjust="spacingAndGlyphs">21</text>
<text x="9.60" y="370.80" font-size="17.15" fill="#2e7d4f" textLength="17.60" lengthAdjust="spacingAndGlyphs">22</text>
<text x="9.60" y="394.80" font-size="17.15" fill="#2e7d4f" textLength="17.60" lengthAdjust="spacingAndGlyphs">23</text>
<text x="9.60" y="418.80" font-size="17.15" fill="#2e7d4f" textLength="17.60" lengthAdjust="spacingAndGlyphs">24</text>
<text x="9.60" y="442.80" font-size="17.15" fill="#2e7d4f" textLength="17.60" lengthAdjust="spacingAndGlyphs">25</text>
<text x="9.60" y="466.80" font-size="17.15" fill="#2e7d4f" textLength="17.60" lengthAdjust="spacingAndGlyphs">26</text>
<text x="9.60" y="490.80" font-size="17.15" fill="#2e7d4f" textLength="17.60" lengthAdjust="spacingAndGlyphs">27</text>
<text x="9.60" y="514.80" font-size="17.15" fill="#2e7d4f" textLength="17.60" lengthAdjust="spacingAndGlyphs">28</text>
<text x="9.60" y="538.80" font-size="17.15" fill="#2e7d4f" textLength="17.60" lengthAdjust="spacingAndGlyphs">29</text>
<text x="9.60" y="562.80" font-size="17.15" fill="#222" textLength="17.60" lengthAdjust="spacingAndGlyphs">30</text>
<text x="9.60" y="586.80" font-size="17.15" fill="#222" textLength="17.60" lengthAdjust="spacingAndGlyphs">31</text>
<text x="9.60" y="610.80" font-size="17.15" fill="#222" textLength="17.60" lengthAdjust="spacingAndGlyphs">32</text>
<rect x="156" y="329" width="105" height="23" fill="#c8c8c8" />
<rect x="156" y="352" width="105" height="24" fill="#c8c8c8" />
<rect x="156" y="376" width="105" height="24" fill="#c8c8c8" />
<rect x="156" y="400" width="105" height="24" fill="#ccbc80" />
<rect x="156" y="424" width="105" height="24" fill="#ccbc80" />
<rect x="156" y="448" width="105" height="24" fill="#c8c8c8" />
<rect x="156" y="472" width="105" height="24" fill="#c8c8c8" />
<rect x="156" y="496" width="105" height="24" fill="#c8c8c8" />
<rect x="156" y="520" width="105" height="24" fill="#c8c8c8" />
<rect x="156" y="352" width="105" height="1" fill="#d9d9d9" />
<rect x="156" y="376" width="105" height="1" fill="#d9d9d9" />
<rect x="156" y="400" width="105" height="1" fill="#c8c8c8" />
<rect x="156" y="448" width="105" height="1" fill="#c8c8c8" />
<rect x="156" y="472" width="105" height="1" fill="#d9d9d9" />
<rect x="156" y="496" width="105" height="1" fill="#d9d9d9" />
<rect x="156" y="520" width="105" height="1" fill="#d9d9d9" />
<text x="38.70" y="298.50" font-size="13.66" fill="#111111" font-weight="bold" textLength="27.60" lengthAdjust="spacingAndGlyphs">City</text>
<text x="158.50" y="298.50" font-size="13.66" fill="#111111" font-weight="bold" textLength="73.49" lengthAdjust="spacingAndGlyphs">Start Date</text>
<text x="266.70" y="298.50" font-size="13.66" fill="#111111" font-weight="bold" textLength="46.50" lengthAdjust="spacingAndGlyphs">Rating</text>
<text x="346.60" y="298.50" font-size="13.66" fill="#111111" font-weight="bold" textLength="71.09" lengthAdjust="spacingAndGlyphs">Members</text>
<text x="38.50" y="322.50" font-size="14.53" fill="#111111" textLength="97.49" lengthAdjust="spacingAndGlyphs">San Francisco</text>
<text x="191.60" y="322.50" font-size="14.53" fill="#111111" textLength="66.39" lengthAdjust="spacingAndGlyphs">6/1/2023</text>
<text x="330.50" y="322.50" font-size="14.53" fill="#111111" textLength="7.80" lengthAdjust="spacingAndGlyphs">3</text>
<text x="385.70" y="322.50" font-size="14.53" fill="#111111" textLength="38.81" lengthAdjust="spacingAndGlyphs">1,000</text>
<text x="38.50" y="346.50" font-size="14.53" fill="#111111" textLength="70.90" lengthAdjust="spacingAndGlyphs">San Diego</text>
<text x="191.60" y="346.50" font-size="14.53" fill="#111111" textLength="66.39" lengthAdjust="spacingAndGlyphs">6/5/2023</text>
<text x="330.50" y="346.50" font-size="14.53" fill="#111111" textLength="7.80" lengthAdjust="spacingAndGlyphs">2</text>
<text x="385.70" y="346.50" font-size="14.53" fill="#111111" textLength="38.81" lengthAdjust="spacingAndGlyphs">5,000</text>
<text x="38.50" y="370.50" font-size="14.53" fill="#111111" textLength="84.10" lengthAdjust="spacingAndGlyphs">Los Angeles</text>
<text x="182.40" y="370.50" font-size="14.53" fill="#111111" textLength="75.60" lengthAdjust="spacingAndGlyphs">5/10/2023</text>
<text x="330.50" y="370.50" font-size="14.53" fill="#111111" textLength="7.80" lengthAdjust="spacingAndGlyphs">1</text>
<text x="376.70" y="370.50" font-size="14.53" fill="#111111" textLength="47.79" lengthAdjust="spacingAndGlyphs">10,000</text>
<text x="38.50" y="394.50" font-size="14.53" fill="#111111" textLength="86.89" lengthAdjust="spacingAndGlyphs">Sacramento</text>
<text x="191.60" y="394.50" font-size="14.53" fill="#111111" textLength="66.39" lengthAdjust="spacingAndGlyphs">5/1/2023</text>
<text x="330.50" y="394.50" font-size="14.53" fill="#111111" textLength="7.80" lengthAdjust="spacingAndGlyphs">1</text>
<text x="385.70" y="394.50" font-size="14.53" fill="#111111" textLength="38.81" lengthAdjust="spacingAndGlyphs">2,000</text>
<text x="38.50" y="418.50" font-size="14.53" fill="#111111" textLength="56.90" lengthAdjust="spacingAndGlyphs">Chicago</text>
<text x="191.60" y="418.50" font-size="14.53" fill="#7d5510" textLength="66.39" lengthAdjust="spacingAndGlyphs">7/1/2023</text>
<text x="330.50" y="418.50" font-size="14.53" fill="#111111" textLength="7.80" lengthAdjust="spacingAndGlyphs">3</text>
<text x="385.70" y="418.50" font-size="14.53" fill="#111111" textLength="38.81" lengthAdjust="spacingAndGlyphs">1,000</text>
<text x="38.50" y="442.50" font-size="14.53" fill="#111111" textLength="74.50" lengthAdjust="spacingAndGlyphs">Springfield</text>
<text x="191.60" y="442.50" font-size="14.53" fill="#7d5510" textLength="66.39" lengthAdjust="spacingAndGlyphs">7/3/2023</text>
<text x="330.50" y="442.50" font-size="14.53" fill="#111111" textLength="7.80" lengthAdjust="spacingAndGlyphs">2</text>
<text x="385.70" y="442.50" font-size="14.53" fill="#111111" textLength="38.81" lengthAdjust="spacingAndGlyphs">5,000</text>
<text x="38.50" y="466.50" font-size="14.53" fill="#111111" textLength="45.48" lengthAdjust="spacingAndGlyphs">Peoria</text>
<text x="182.40" y="466.50" font-size="14.53" fill="#111111" textLength="75.60" lengthAdjust="spacingAndGlyphs">4/20/2023</text>
<text x="330.50" y="466.50" font-size="14.53" fill="#111111" textLength="7.80" lengthAdjust="spacingAndGlyphs">1</text>
<text x="376.70" y="466.50" font-size="14.53" fill="#111111" textLength="47.79" lengthAdjust="spacingAndGlyphs">10,000</text>
<text x="38.50" y="490.50" font-size="14.53" fill="#111111" textLength="45.09" lengthAdjust="spacingAndGlyphs">Miami</text>
<text x="182.40" y="490.50" font-size="14.53" fill="#111111" textLength="75.60" lengthAdjust="spacingAndGlyphs">4/25/2023</text>
<text x="330.50" y="490.50" font-size="14.53" fill="#111111" textLength="7.80" lengthAdjust="spacingAndGlyphs">3</text>
<text x="385.70" y="490.50" font-size="14.53" fill="#111111" textLength="38.81" lengthAdjust="spacingAndGlyphs">2,000</text>
<text x="38.50" y="514.50" font-size="14.53" fill="#111111" textLength="79.91" lengthAdjust="spacingAndGlyphs">Tampa Bay</text>
<text x="182.40" y="514.50" font-size="14.53" fill="#111111" textLength="75.60" lengthAdjust="spacingAndGlyphs">6/20/2023</text>
<text x="330.50" y="514.50" font-size="14.53" fill="#111111" textLength="7.80" lengthAdjust="spacingAndGlyphs">2</text>
<text x="385.70" y="514.50" font-size="14.53" fill="#111111" textLength="38.81" lengthAdjust="spacingAndGlyphs">1,000</text>
<text x="38.50" y="538.50" font-size="14.53" fill="#111111" textLength="84.50" lengthAdjust="spacingAndGlyphs">Jacksonville</text>
<text x="182.40" y="538.50" font-size="14.53" fill="#111111" textLength="75.60" lengthAdjust="spacingAndGlyphs">6/30/2023</text>
<text x="330.50" y="538.50" font-size="14.53" fill="#111111" textLength="7.80" lengthAdjust="spacingAndGlyphs">3</text>
<text x="376.70" y="538.50" font-size="14.53" fill="#111111" textLength="47.79" lengthAdjust="spacingAndGlyphs">10,000</text>
<rect x="154" y="305" width="108.5" height="240" fill="none" stroke="#217346" stroke-width="2.2" rx="0" />
<rect x="259.5" y="541" width="6.5" height="6.5" fill="#ffffff" />
<rect x="260" y="541.5" width="5.5" height="5.5" fill="#217346" />
<rect x="1174" y="279" width="25" height="339" fill="#f0f0f0" />
<rect x="1173" y="280" width="1" height="338" fill="#a0a0a0" />
<rect x="1177.5" y="459.5" width="18" height="129" fill="#ffffff" stroke="#8f8f8f" stroke-width="1" rx="0" />
<rect x="1177.5" y="259.5" width="18" height="18" fill="#ffffff" stroke="#a0a0a0" stroke-width="1" rx="0" />
<path d="M1181.5 270.5 L1186.5 265 L1191.5 270.5 Z" fill="#222" stroke="#222" stroke-width="0" />
<rect x="1177.5" y="600.5" width="18" height="18" fill="#ffffff" stroke="#a0a0a0" stroke-width="1" rx="0" />
<path d="M1181.5 607.3 L1186.5 612.8 L1191.5 607.3 Z" fill="#222" stroke="#222" stroke-width="0" />
<defs><filter id="ds" x="-10%" y="-15%" width="120%" height="135%"><feGaussianBlur stdDeviation="6"/></filter></defs>
<rect x="537" y="311" width="430" height="168" fill="rgba(0,0,0,0.28)" filter="url(#ds)"/>
<rect x="539" y="308" width="426" height="167" fill="#f0f0f0" />
<rect x="539" y="308" width="426" height="38" fill="#ffffff" />
<rect x="539.5" y="308.5" width="425" height="166" fill="none" stroke="#707070" stroke-width="1" rx="0" />
<text x="549.30" y="333.00" font-size="15.12" fill="#222" textLength="112.90" lengthAdjust="spacingAndGlyphs">A Date Occurring</text>
<text x="873.50" y="332.50" font-size="16.72" fill="#222" textLength="7.00" lengthAdjust="spacingAndGlyphs">?</text>
<path d="M928.3 321.3 L940.2 333.2 M940.2 321.3 L928.3 333.2" fill="none" stroke="#222" stroke-width="1.15" />
<text x="548.90" y="368.50" font-size="13.37" fill="#111" font-weight="bold" textLength="260.40" lengthAdjust="spacingAndGlyphs">Format cells that contain a date occurring:</text>
<rect x="547.5" y="391.5" width="136" height="24" fill="#ffffff" stroke="#a8a8a8" stroke-width="1" rx="0" />
<rect x="549" y="395" width="1" height="18" fill="#a9c1dd" />
<rect x="661.5" y="393.5" width="20" height="20" fill="#e1e1e1" stroke="#b3b3b3" stroke-width="1" rx="0" />
<path d="M667.0 401.0 L671.5 406.0 L676.0 401.0" fill="none" stroke="#444" stroke-width="1.1" />
<text x="551.20" y="407.90" font-size="13.37" fill="#111" textLength="64.20" lengthAdjust="spacingAndGlyphs">This Month</text>
<text x="696.22" y="408.70" font-size="13.52" fill="#222" textLength="22.18" lengthAdjust="spacingAndGlyphs">with</text>
<rect x="726.5" y="385" width="236" height="36.5" fill="none" stroke="#e5584f" stroke-width="3" rx="0" />
<rect x="731.5" y="391.5" width="225" height="24" fill="#ffffff" stroke="#a8a8a8" stroke-width="1" rx="0" />
<rect x="733" y="395" width="1" height="18" fill="#a9c1dd" />
<rect x="934.5" y="393.5" width="20" height="20" fill="#e1e1e1" stroke="#b3b3b3" stroke-width="1" rx="0" />
<path d="M940.0 401.0 L944.5 406.0 L949.0 401.0" fill="none" stroke="#444" stroke-width="1.1" />
<text x="734.70" y="408.20" font-size="13.37" fill="#111" textLength="183.20" lengthAdjust="spacingAndGlyphs">Yellow Fill with Dark Yellow Text</text>
<rect x="772" y="437" width="84" height="26" fill="#e1e1e1" stroke="#0067c0" stroke-width="2" rx="0" />
<rect x="773.5" y="438.5" width="82" height="24" fill="none" stroke="#111" stroke-width="1" rx="0" stroke-dasharray="1 1" shape-rendering="crispEdges"/>
<text x="805.30" y="455.20" font-size="13.95" fill="#111" textLength="17.40" lengthAdjust="spacingAndGlyphs">OK</text>
<rect x="870.5" y="436.5" width="85" height="27" fill="#e1e1e1" stroke="#adadad" stroke-width="1" rx="0" />
<text x="894.70" y="455.20" font-size="13.95" fill="#111" textLength="37.30" lengthAdjust="spacingAndGlyphs">Cancel</text>
<rect x="0" y="618" width="1174" height="1.3" fill="#8f8f8f" />
<rect x="0" y="619.3" width="1200" height="27.7" fill="#e6e6e6" />
<rect x="0" y="647" width="1200" height="1" fill="#c8c8c8" />
<path d="M34.3 628.3 L28.8 632.6 L34.3 637 Z" fill="#217346" stroke="#217346" stroke-width="0" />
<path d="M57.5 628.3 L63 632.6 L57.5 637 Z" fill="#217346" stroke="#217346" stroke-width="0" />
<rect x="82.5" y="633.5" width="2" height="2" fill="#217346" />
<rect x="88" y="633.5" width="2" height="2" fill="#217346" />
<rect x="93.5" y="633.5" width="2" height="2" fill="#217346" />
<rect x="104" y="622" width="1" height="21" fill="#9a9a9a" />
<text x="118.75" y="635.00" font-size="17.44" fill="#444" textLength="125.75" lengthAdjust="spacingAndGlyphs">SUMIF_COUNTIF</text>
<rect x="260" y="622" width="1" height="21" fill="#9a9a9a" />
<text x="275.50" y="635.00" font-size="17.44" fill="#444" textLength="134.00" lengthAdjust="spacingAndGlyphs">ZeroBasedBudget</text>
<rect x="426" y="618" width="60" height="25.5" fill="#ffffff" />
<rect x="426" y="618" width="1" height="25.5" fill="#b0b0b0" />
<rect x="485" y="618" width="1" height="25.5" fill="#b0b0b0" />
<rect x="426" y="641.8" width="60" height="2" fill="#217346" />
<text x="439.25" y="635.00" font-size="17.44" fill="#217346" font-weight="bold" textLength="33.25" lengthAdjust="spacingAndGlyphs">MTE</text>
<text x="502.00" y="635.00" font-size="17.44" fill="#444" textLength="140.50" lengthAdjust="spacingAndGlyphs">Scenario Summary</text>
<rect x="660" y="622" width="1" height="21" fill="#9a9a9a" />
<text x="674.50" y="635.00" font-size="17.44" fill="#444" textLength="68.49" lengthAdjust="spacingAndGlyphs">ScenarioI</text>
<rect x="751" y="633.5" width="2" height="2" fill="#217346" />
<rect x="756" y="633.5" width="2" height="2" fill="#217346" />
<rect x="761" y="633.5" width="2" height="2" fill="#217346" />
<circle cx="786" cy="632.8" r="9.3" fill="none" stroke="#777" stroke-width="1.3"/>
<path d="M780.5 632.8 H791.5 M786 627.3 V638.3" fill="none" stroke="#555" stroke-width="1.5" />
<rect x="814.5" y="627.5" width="2.5" height="2.5" fill="#b0b0b0" />
<rect x="814.5" y="632.5" width="2.5" height="2.5" fill="#b0b0b0" />
<rect x="814.5" y="637.5" width="2.5" height="2.5" fill="#b0b0b0" />
<rect x="832" y="623" width="343" height="19" fill="#f0f0f0" />
<rect x="832.5" y="623.5" width="18" height="18" fill="#ffffff" stroke="#a0a0a0" stroke-width="1" rx="0" />
<path d="M844.5 628 L839 632.5 L844.5 637 Z" fill="#222" stroke="#222" stroke-width="0" />
<rect x="850.5" y="623.5" width="282" height="17.5" fill="#ffffff" stroke="#a0a0a0" stroke-width="1" rx="0" />
<rect x="1155.5" y="623.5" width="18" height="18" fill="#ffffff" stroke="#a0a0a0" stroke-width="1" rx="0" />
<path d="M1162.5 628 L1168 632.5 L1162.5 637 Z" fill="#222" stroke="#222" stroke-width="0" />
<rect x="0" y="648" width="1200" height="27" fill="#f3f2f1" />
<rect x="0" y="674" width="1200" height="1" fill="#6f6f6f" />
<text x="11.50" y="665.70" font-size="12.79" fill="#444" textLength="35.30" lengthAdjust="spacingAndGlyphs">Ready</text>
<rect x="71.5" y="654.5" width="16" height="13" fill="none" stroke="#555" stroke-width="1.2" rx="0" />
<rect x="71.5" y="657" width="16" height="1.3" fill="#555" />
<circle cx="83" cy="664.5" r="4.5" fill="#f3f2f1" stroke="#555" stroke-width="1.3"/><circle cx="83" cy="664.5" r="2" fill="#555"/>
<rect x="74" y="660" width="3" height="1.2" fill="#555" />
<rect x="74" y="663" width="3" height="1.2" fill="#555" />
<path d="M682 664.3 H676.8 V653.8 H693.4 V659.5" fill="none" stroke="#555" stroke-width="1.4" />
<circle cx="688.3" cy="664.5" r="3.4" fill="#f3f2f1" stroke="#555" stroke-width="1.6"/><circle cx="688.3" cy="664.5" r="1.2" fill="#555"/>
<path d="M688.3 659.2 V669.8 M683.7 661.8 L692.9 667.2 M683.7 667.2 L692.9 661.8" fill="none" stroke="#555" stroke-width="1.6" stroke-dasharray="1.6 7.4"/>
<text x="697.60" y="665.60" font-size="13.37" fill="#444" textLength="91.00" lengthAdjust="spacingAndGlyphs">Display Settings</text>
<rect x="813" y="648" width="50" height="26" fill="#d0d0d0" />
<rect x="829.8" y="652.8" width="15.4" height="15.4" fill="none" stroke="#555" stroke-width="1.6" rx="0" />
<rect x="834.3333333333334" y="652" width="1.6" height="17" fill="#555" />
<rect x="829" y="657.3333333333334" width="17" height="1.6" fill="#555" />
<rect x="839.6666666666666" y="652" width="1.6" height="17" fill="#555" />
<rect x="829" y="662.6666666666666" width="17" height="1.6" fill="#555" />
<rect x="879.8" y="652.8" width="17.4" height="15.4" fill="none" stroke="#555" stroke-width="1.5" rx="0" />
<rect x="884" y="655.8" width="9" height="9.5" fill="#d6d6d6" stroke="#444" stroke-width="1.4" rx="0" />
<rect x="885" y="659" width="7" height="1.2" fill="#555" />
<rect x="885" y="661.8" width="7" height="1.2" fill="#555" />
<rect x="929.8" y="652.8" width="17.4" height="15.4" fill="none" stroke="#555" stroke-width="1.5" rx="0" />
<path d="M930 661.5 H940 V653 M934.5 653 V661.5" fill="none" stroke="#555" stroke-width="1.4" />
<rect x="970" y="660" width="10" height="1.2" fill="#444" />
<rect x="986" y="661" width="125" height="1.2" fill="#444" />
<rect x="1046" y="654" width="6" height="14" fill="#333" />
<rect x="1117" y="660" width="10" height="1.2" fill="#444" />
<rect x="1121.4" y="655" width="1.2" height="11" fill="#444" />
<text x="1143.80" y="665.80" font-size="12.79" fill="#666" textLength="30.10" lengthAdjust="spacingAndGlyphs">100%</text>
<rect x="0" y="44" width="1" height="631" fill="#6f6f6f" />
<rect x="1199" y="44" width="1" height="631" fill="#6f6f6f" />
<rect x="0" y="0" width="1" height="44" fill="#6c9880" />
<rect x="1199" y="0" width="1" height="44" fill="#6c9880" />
</svg></body></html>
